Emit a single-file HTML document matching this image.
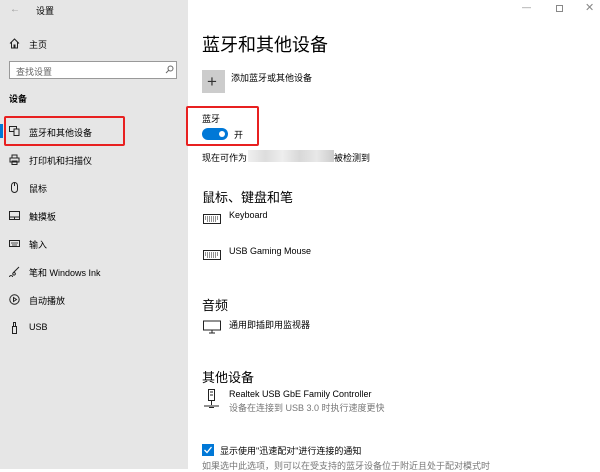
<!DOCTYPE html>
<html><head><meta charset="utf-8"><style>
*{margin:0;padding:0;box-sizing:border-box}
body{width:600px;height:469px;overflow:hidden;background:#fff;font-family:"Liberation Sans","Noto Sans CJK SC",sans-serif;color:#000;position:relative}
.side{position:absolute;left:0;top:0;width:188px;height:469px;background:#e6e6e6}
.a{position:absolute;white-space:nowrap}
.s{font-size:9px}
.item{position:absolute;left:29px;font-size:9px;white-space:nowrap}
.ico{position:absolute;left:9px}
.red{position:absolute;border:2px solid #e82020;border-radius:2px}
</style></head><body>
<div class="side">
<div class="a" style="left:10px;top:4px;font-size:10px;color:#999">←</div>
<div class="a s" style="left:36px;top:4px">设置</div>
<svg class="a" style="left:9px;top:38px" width="11" height="11" viewBox="0 0 11 11"><path d="M1 5.5 5.5 1 10 5.5M2.5 4v6h2.5V7h1v3h2.5V4" fill="none" stroke="#222" stroke-width="1"/></svg>
<div class="a s" style="left:29px;top:38px">主页</div>
<div class="a" style="left:9px;top:61px;width:168px;height:18px;border:1px solid #999;background:#fff"></div>
<div class="a s" style="left:16px;top:65px;color:#666">查找设置</div>
<svg class="a" style="left:165px;top:65px" width="9" height="9" viewBox="0 0 9 9"><circle cx="5.5" cy="3.5" r="2.5" fill="none" stroke="#666"/><path d="M4 5 1 8" stroke="#666"/></svg>
<div class="a" style="left:9px;top:92px;font-size:9px;font-weight:bold">设备</div>
<div class="a" style="left:0;top:124px;width:3px;height:14px;background:#0078d7"></div>
<svg class="ico" style="top:126px" width="11" height="10" viewBox="0 0 11 10"><rect x="0.5" y="0.5" width="7" height="5" fill="none" stroke="#222"/><rect x="5" y="3" width="5" height="6.5" fill="#e6e6e6" stroke="#222"/></svg>
<div class="item" style="top:126px">蓝牙和其他设备</div>
<svg class="ico" style="top:154px" width="11" height="11" viewBox="0 0 11 11"><path d="M3 4V1h5v3M1 4h9v4H1zM3 7h5v3.5H3z" fill="none" stroke="#222"/></svg>
<div class="item" style="top:154px">打印机和扫描仪</div>
<svg class="ico" style="top:182px" width="11" height="12" viewBox="0 0 11 12"><rect x="2.5" y="0.5" width="6" height="10" rx="3" fill="none" stroke="#222"/><path d="M5.5 1v3" stroke="#222"/></svg>
<div class="item" style="top:182px">鼠标</div>
<svg class="ico" style="top:211px" width="11" height="10" viewBox="0 0 11 10"><rect x="0.5" y="0.5" width="10" height="8" fill="none" stroke="#222"/><path d="M1 6h9M5.5 6v3" stroke="#222"/></svg>
<div class="item" style="top:210px">触摸板</div>
<svg class="ico" style="top:240px" width="11" height="8" viewBox="0 0 11 8"><rect x="0.5" y="0.5" width="10" height="6" fill="none" stroke="#222"/><path d="M2 3h7M3 5h5" stroke="#222" stroke-width=".8"/></svg>
<div class="item" style="top:238px">输入</div>
<svg class="ico" style="top:266px" width="11" height="11" viewBox="0 0 11 11"><path d="M10 1 4 7M2 9.5a1.5 1.5 0 1 0 .1 0M5 6.5a1.3 1.3 0 1 0 .1 0" fill="none" stroke="#222"/></svg>
<div class="item" style="top:266px">笔和 Windows Ink</div>
<svg class="ico" style="top:294px" width="11" height="11" viewBox="0 0 11 11"><circle cx="5.5" cy="5.5" r="4.7" fill="none" stroke="#222"/><path d="M4.5 3.5v4l3-2z" fill="none" stroke="#222"/></svg>
<div class="item" style="top:294px">自动播放</div>
<svg class="ico" style="top:322px" width="11" height="12" viewBox="0 0 11 12"><path d="M3.5 4.5h4v7h-4zM4.5 .5h2v4h-2z" fill="none" stroke="#222"/></svg>
<div class="item" style="top:322px">USB</div>
</div>
<div class="red" style="left:4px;top:116px;width:121px;height:30px"></div>
<div class="a" style="left:522px;top:2px;font-size:9px;color:#888">—</div>
<div class="a" style="left:556px;top:5px;width:7px;height:7px;border:1px solid #888"></div>
<div class="a" style="left:585px;top:1px;font-size:11px;color:#888">✕</div>
<div class="a" style="left:202px;top:31px;font-size:18px">蓝牙和其他设备</div>
<div class="a" style="left:202px;top:70px;width:23px;height:23px;background:#ccc"></div>
<div class="a" style="left:207px;top:70px;font-size:17px;color:#333;line-height:23px">+</div>
<div class="a s" style="left:231px;top:71px">添加蓝牙或其他设备</div>
<div class="red" style="left:186px;top:106px;width:73px;height:40px"></div>
<div class="a s" style="left:202px;top:112px">蓝牙</div>
<div class="a" style="left:202px;top:128px;width:26px;height:12px;border-radius:6px;background:#0078d7"></div>
<div class="a" style="left:219px;top:131px;width:6px;height:6px;border-radius:3px;background:#fff"></div>
<div class="a s" style="left:234px;top:128px">开</div>
<div class="a s" style="left:202px;top:151px">现在可作为</div>
<div class="a" style="left:248px;top:150px;width:86px;height:12px;background:linear-gradient(90deg,#f0f0f0,#ddd,#eee,#d8d8d8,#e8e8e8,#ccc)"></div>
<div class="a s" style="left:334px;top:151px">被检测到</div>
<div class="a" style="left:202px;top:187px;font-size:13px">鼠标、键盘和笔</div>
<svg class="a" style="left:203px;top:213px" width="18" height="12" viewBox="0 0 18 12"><rect x="0.5" y="1.5" width="17" height="9" fill="none" stroke="#222"/><path d="M2 4h14M2 6h14M4 8h10" stroke="#222" stroke-dasharray="1 1"/></svg>
<div class="a s" style="left:229px;top:210px;font-family:'Liberation Sans',sans-serif">Keyboard</div>
<svg class="a" style="left:203px;top:249px" width="18" height="12" viewBox="0 0 18 12"><rect x="0.5" y="1.5" width="17" height="9" fill="none" stroke="#222"/><path d="M2 4h14M2 6h14M4 8h10" stroke="#222" stroke-dasharray="1 1"/></svg>
<div class="a s" style="left:229px;top:246px">USB Gaming Mouse</div>
<div class="a" style="left:202px;top:295px;font-size:13px">音频</div>
<svg class="a" style="left:203px;top:320px" width="18" height="14" viewBox="0 0 18 14"><rect x="0.5" y="1" width="17" height="9" fill="none" stroke="#222"/><path d="M9 10v3M6 13h6" stroke="#222"/></svg>
<div class="a s" style="left:229px;top:318px">通用即插即用监视器</div>
<div class="a" style="left:202px;top:367px;font-size:13px">其他设备</div>
<svg class="a" style="left:204px;top:389px" width="16" height="20" viewBox="0 0 16 20"><rect x="4.5" y="0.5" width="6" height="11" fill="none" stroke="#222"/><path d="M6 3h3M6 6h3M7.5 12v4M0 17h15M5 18.5h5" stroke="#222"/></svg>
<div class="a s" style="left:229px;top:389px">Realtek USB GbE Family Controller</div>
<div class="a s" style="left:229px;top:401px;color:#777">设备在连接到 USB 3.0 时执行速度更快</div>
<div class="a" style="left:202px;top:444px;width:12px;height:12px;background:#0078d7"></div>
<svg class="a" style="left:202px;top:444px" width="12" height="12" viewBox="0 0 12 12"><path d="M2.5 6 5 8.5 9.5 3" fill="none" stroke="#fff" stroke-width="1.3"/></svg>
<div class="a s" style="left:220px;top:444px">显示使用"迅速配对"进行连接的通知</div>
<div class="a s" style="left:202px;top:459px;color:#777">如果选中此选项，则可以在受支持的蓝牙设备位于附近且处于配对模式时</div>
</body></html>
